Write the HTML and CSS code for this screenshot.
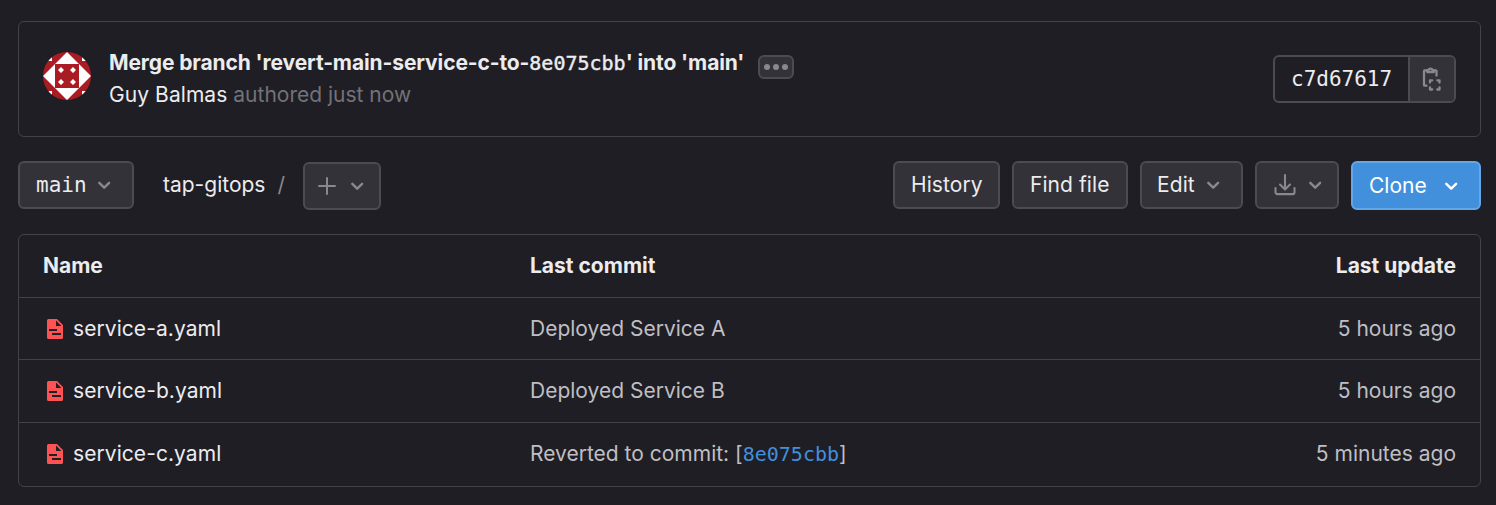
FILE: index.html
```html
<!DOCTYPE html>
<html lang="en">
<head>
<meta charset="utf-8">
<title>tap-gitops</title>
<link rel="stylesheet" href="styles.css">
</head>
<body>
<svg class="sprite" aria-hidden="true">
  <symbol id="chevron" viewBox="0 0 24 24"><path d="M6.300 9.800 11.200 14.700l4.900-4.900" fill="none" stroke="currentColor" stroke-width="2.400" stroke-linecap="round" stroke-linejoin="round"/></symbol>
  <symbol id="file" viewBox="0 0 16 20"><path fill="currentColor" fill-rule="evenodd" d="M1.500 0H10l6 6v12.500a1.500 1.500 0 0 1-1.500 1.500h-13A1.500 1.500 0 0 1 0 18.500V1.500A1.500 1.500 0 0 1 1.500 0ZM9 1.600V7h5.400ZM2 10v2h8v-2ZM5 14v2h9v-2Z"/></symbol>
</svg>
<main class="page">
  <section class="commit">
    <svg class="avatar" viewBox="0 0 48 48">
      <clipPath id="round"><circle cx="24" cy="24" r="24"/></clipPath>
      <g clip-path="url(#round)">
        <path fill="#aa1c24" d="M0 0h48v48H0z"/>
        <path fill="#fff" d="M24 0 36 12 48 24 36 36 24 48 12 36 0 24 12 12ZM3 3h6v6H3ZM39 3h6v6h-6ZM3 39h6v6H3ZM39 39h6v6h-6Z"/>
        <path fill="#aa1c24" d="M12 12h24v24H12z"/>
        <path fill="#fff" d="m18 15 3 3-3 3-3-3ZM30 15l3 3-3 3-3-3ZM18 27l3 3-3 3-3-3ZM30 27l3 3-3 3-3-3Z"/>
      </g>
    </svg>
    <div class="commit-text">
      <div class="commit-title"><span class="title-a">Merge branch 'revert-main-service-c-to-</span><span class="title-sha">8e075cbb</span><span class="title-b">' into 'main'</span><button class="more"><svg viewBox="0 0 24 6" width="24" height="6"><g fill="currentColor"><circle cx="3" cy="3" r="3"/><circle cx="12" cy="3" r="3"/><circle cx="21" cy="3" r="3"/></g></svg></button></div>
      <div class="commit-meta"><span class="author">Guy Balmas</span> <span class="authored">authored just now</span></div>
    </div>
    <div class="sha-group">
      <span class="sha">c7d67617</span>
      <button class="copy"><svg width="24" height="24" viewBox="0 0 24 24" fill="none" stroke="currentColor" stroke-width="2.300" stroke-linecap="round" stroke-linejoin="round"><path d="M6.500 3.300H4.600A.6.600 0 0 0 4 3.900V18a.7.700 0 0 0 .7.700H6.500M14.500 3.300h1.400a.6.600 0 0 1 .6.600V8.500"/><path d="M7.200 5V3.200h1.200a2.200 2.200 0 0 1 4.200 0h1.200V5Z"/><path d="M10 15.500v-2.200h2.200M17.300 13.300h2.200v2.200M10 20.300v2.200h2.200M19.500 20.300v2.200h-2.200"/></svg></button>
    </div>
  </section>

  <div class="toolbar">
    <button class="btn branch"><span>main</span><svg class="chev"><use href="#chevron"/></svg></button>
    <div class="crumbs"><span class="repo">tap-gitops</span><span class="slash">/</span></div>
    <button class="btn add"><svg width="18" height="18" viewBox="0 0 18 18"><path d="M9 1v16M1 9h16" stroke="currentColor" stroke-width="2" stroke-linecap="round"/></svg><svg class="chev"><use href="#chevron"/></svg></button>
    <div class="actions">
      <button class="btn history">History</button>
      <button class="btn find">Find file</button>
      <button class="btn edit"><span>Edit</span><svg class="chev"><use href="#chevron"/></svg></button>
      <button class="btn download"><svg width="24" height="24" viewBox="0 0 24 24" fill="none" stroke="currentColor" stroke-width="2.100" stroke-linecap="round" stroke-linejoin="round"><path d="M12 2v14M7 11.500l5 5 5-5M2.500 15v4.300A1.800 1.800 0 0 0 4.300 21.100h15.400a1.800 1.800 0 0 0 1.800-1.800V15"/></svg><svg class="chev"><use href="#chevron"/></svg></button>
      <button class="btn clone"><span>Clone</span><svg class="chev"><use href="#chevron"/></svg></button>
    </div>
  </div>

  <section class="files">
    <div class="row head"><span class="h-name">Name</span><span class="h-commit">Last commit</span><span class="h-update">Last update</span></div>
    <div class="row"><span class="name"><svg class="file"><use href="#file"/></svg><span>service-a.yaml</span></span><span class="msg">Deployed Service A</span><span class="time">5 hours ago</span></div>
    <div class="row"><span class="name"><svg class="file"><use href="#file"/></svg><span>service-b.yaml</span></span><span class="msg">Deployed Service B</span><span class="time">5 hours ago</span></div>
    <div class="row"><span class="name"><svg class="file"><use href="#file"/></svg><span>service-c.yaml</span></span><span class="msg">Reverted to commit: [<a class="link">8e075cbb</a>]</span><span class="time">5 minutes ago</span></div>
  </section>
</main>
</body>
</html>
```
FILE: styles.css
```css
* { box-sizing: border-box; }
body {
  margin: 0;
  background: #1f1e24;
  color: #ececef;
  font: 400 21px/32px Inter, "Noto Sans", sans-serif;
}
button { font: inherit; color: inherit; padding: 0; margin: 0; }
.sprite { display: none; }
svg { display: block; flex: none; }
.page { padding: 21px 15px 0 18px; }

.commit {
  height: 116px;
  border: 1px solid #434248;
  border-radius: 6px;
  display: flex;
  align-items: flex-start;
  padding: 0 24px;
}
.avatar { width: 48px; height: 48px; margin-top: 30px; }
.commit-text { margin: 25px 0 0 18px; flex: 1; white-space: nowrap; }
.commit-title { display: flex; font-weight: 650; letter-spacing: -0.11px; height: 32px; }
.title-sha {
  font-family: "DejaVu Sans Mono", monospace;
  font-weight: 400; font-size: 20px; letter-spacing: 0;
  -webkit-text-stroke: 0.4px currentColor;
}
.more {
  width: 36px; height: 24px;
  margin: 8px 0 0 14px;
  border: 2px solid #4c4b51;
  border-radius: 6px;
  background: #333238;
  color: #89888d;
  display: flex; align-items: center; justify-content: center;
}
.author { letter-spacing: 0.07px; }
.authored { color: #737278; }
.sha-group {
  width: 183px; height: 48px;
  margin-top: 33px;
  border: 2px solid #4c4b51;
  border-radius: 6px;
  display: flex;
  overflow: hidden;
}
.sha {
  font-family: "DejaVu Sans Mono", monospace;
  width: 133px; line-height: 44px;
  padding-left: 16px;
}
.copy {
  flex: 1;
  border: 0; border-left: 2px solid #4c4b51;
  background: #333238; color: #89888d;
  display: flex; align-items: center; justify-content: center;
}

.toolbar { display: flex; height: 48px; margin-top: 24px; }
.btn {
  height: 48px;
  border: 2px solid #4c4b51;
  border-radius: 6px;
  background: #333238;
  display: flex; align-items: center;
  padding: 0 16px;
  white-space: nowrap;
}
.chev { width: 24px; height: 24px; color: #89888d; }
.branch { width: 116px; font-family: "DejaVu Sans Mono", monospace; gap: 6px; }
.crumbs { display: flex; gap: 12px; margin-left: 29px; width: 140px; line-height: 48px; }
.slash { color: #89888d; }
.add { width: 78px; margin-top: 1px; padding: 0 0 0 13px; gap: 10px; color: #89888d; }
.actions { margin-left: auto; display: flex; gap: 12px; }
.history { width: 107px; letter-spacing: 0.07px; }
.find { width: 116px; letter-spacing: 0.07px; }
.edit { width: 103px; gap: 7px; padding-left: 15px; letter-spacing: 0.1px; }
.download { width: 84px; color: #89888d; gap: 7px; }
.clone {
  width: 130px; height: 49px;
  background: #428fdc; border-color: #63a6e9; color: #fff;
  gap: 13px;
}
.clone .chev { color: #fff; }

.files { margin-top: 25px; height: 253px; border: 1px solid #434248; border-radius: 6px; }
.row {
  display: grid;
  grid-template-columns: 487px 1fr auto;
  height: 62.6px;
  line-height: 62px;
  padding: 0 24px;
  border-bottom: 1px solid #434248;
  white-space: nowrap;
}
.row:last-child { border-bottom: 0; }
.head { font-weight: 660; }
.name { display: flex; align-items: center; gap: 10px; padding-left: 4px; letter-spacing: 0.07px; }
.file { width: 16px; height: 20px; color: #ff5252; }
.msg, .time { color: #bfbfc3; }
.link { font-family: "DejaVu Sans Mono", monospace; font-size: 20px; color: #428fdc; }
```
